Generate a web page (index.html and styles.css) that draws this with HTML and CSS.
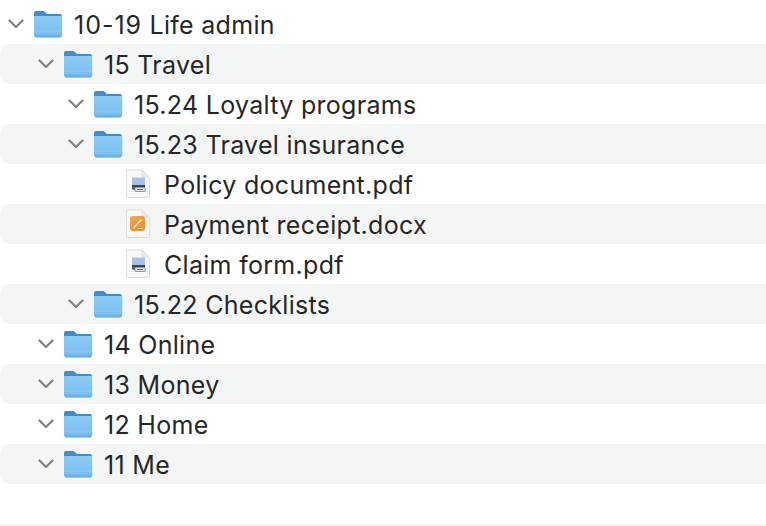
FILE: index.html
```html
<!DOCTYPE html>
<html lang="en">
<head>
<meta charset="utf-8">
<title>Life admin</title>
<link rel="stylesheet" href="styles.css">
</head>
<body>
<svg class="defs" width="0" height="0" aria-hidden="true">
  <defs>
    <linearGradient id="fb" x1="0" y1="0" x2="0" y2="1">
      <stop offset="0" stop-color="#8ccbf5"/>
      <stop offset="0.72" stop-color="#7cc0f2"/>
      <stop offset="1" stop-color="#68afe8"/>
    </linearGradient>
    <linearGradient id="ob" x1="0" y1="0" x2="0.6" y2="1">
      <stop offset="0" stop-color="#f5ab4a"/>
      <stop offset="1" stop-color="#ee8b2c"/>
    </linearGradient>
    <symbol id="chevron" viewBox="0 0 16 10">
      <path d="M1.500 1.500 8 8l6.500-6.500" fill="none" stroke="#7f8182" stroke-width="2.200" stroke-linecap="round" stroke-linejoin="round"/>
    </symbol>
    <symbol id="folder" viewBox="0 0 30 28">
      <path d="M1 5V3a2 2 0 0 1 2-2h6.500c1.200 0 1.800.5 2.600 1.300L14 4h13a2 2 0 0 1 2 2v4H1Z" fill="#3f8cd3"/>
      <path d="M1 7.200C1 6.300 1.500 6 2.300 6H28c.7 0 1.200.4 1.200 1.200V25a2 2 0 0 1-2 2H3a2 2 0 0 1-2-2Z" fill="url(#fb)"/>
      <path d="M1 21.200h28.200M1 23.200h28.200" stroke="#a4d5f7" stroke-width=".7" opacity=".75"/>
      <path d="M2 27.400h26" stroke="#8b97a3" stroke-width=".9" opacity=".7"/>
    </symbol>
    <symbol id="page" viewBox="0 0 26 30">
      <path d="M2.500 1h15.500L25.500 8.500V27a1.500 1.500 0 0 1-1.500 1.500H4A1.500 1.500 0 0 1 2.500 27Z" fill="#f9f9f9" stroke="#d8d8d8" stroke-width=".9"/>
      <path d="M18 1v6a1.500 1.500 0 0 0 1.500 1.500h6Z" fill="#e9e9e9" stroke="#dcdcdc" stroke-width=".6"/>
    </symbol>
    <symbol id="pdf" viewBox="0 0 26 30">
      <use href="#page" width="26" height="30"/>
      <rect x="8" y="8.500" width="13" height="8" fill="#a9c0ea"/>
      <rect x="8" y="16" width="13" height="2.200" fill="#3a4460"/>
      <path d="M11 18.500h10v4h-10Z" fill="#eceef2" stroke="#6a7080" stroke-width=".7"/>
      <path d="M8 18.200h3v2.300H8Z" fill="#4a526a"/>
      <path d="M13 20.500h6" stroke="#4a526a" stroke-width=".8"/>
    </symbol>
    <symbol id="docx" viewBox="0 0 26 30">
      <use href="#page" width="26" height="30"/>
      <rect x="6" y="7" width="15" height="15" rx="3" fill="url(#ob)"/>
      <path d="M10 18.500 17 11" stroke="#fdf1de" stroke-width="1.500" stroke-linecap="round"/>
      <path d="M14 19.500h5" stroke="#fbe2bd" stroke-width=".9"/>
    </symbol>
  </defs>
</svg>
<ul class="tree">
  <li class="row d0"><svg class="chev"><use href="#chevron"/></svg><svg class="folder"><use href="#folder"/></svg><span class="name"><span class="range">10-19</span> Life admin</span></li>
  <li class="row d1 alt"><svg class="chev"><use href="#chevron"/></svg><svg class="folder"><use href="#folder"/></svg><span class="name">15 Travel</span></li>
  <li class="row d2"><svg class="chev"><use href="#chevron"/></svg><svg class="folder"><use href="#folder"/></svg><span class="name">15.24 Loyalty programs</span></li>
  <li class="row d2 alt"><svg class="chev"><use href="#chevron"/></svg><svg class="folder"><use href="#folder"/></svg><span class="name">15.23 Travel insurance</span></li>
  <li class="row d3"><svg class="file"><use href="#pdf"/></svg><span class="name">Policy document.pdf</span></li>
  <li class="row d3 alt"><svg class="file"><use href="#docx"/></svg><span class="name">Payment receipt.docx</span></li>
  <li class="row d3"><svg class="file"><use href="#pdf"/></svg><span class="name">Claim form.pdf</span></li>
  <li class="row d2 alt"><svg class="chev"><use href="#chevron"/></svg><svg class="folder"><use href="#folder"/></svg><span class="name">15.22 Checklists</span></li>
  <li class="row d1"><svg class="chev"><use href="#chevron"/></svg><svg class="folder"><use href="#folder"/></svg><span class="name">14 Online</span></li>
  <li class="row d1 alt"><svg class="chev"><use href="#chevron"/></svg><svg class="folder"><use href="#folder"/></svg><span class="name">13 Money</span></li>
  <li class="row d1"><svg class="chev"><use href="#chevron"/></svg><svg class="folder"><use href="#folder"/></svg><span class="name">12 Home</span></li>
  <li class="row d1 alt"><svg class="chev"><use href="#chevron"/></svg><svg class="folder"><use href="#folder"/></svg><span class="name">11 Me</span></li>
  <li class="row"></li>
  <li class="end"></li>
</ul>
</body>
</html>
```

FILE: styles.css
```css
html, body {
  margin: 0;
  padding: 0;
  background: #ffffff;
  overflow: hidden;
}
body {
  height: 526px;
  font-family: Inter, "Liberation Sans", sans-serif;
  color: #262626;
}
.defs {
  display: block;
  height: 0;
}
.tree {
  list-style: none;
  margin: 0;
  padding: 4px 0 0;
}
.row {
  display: flex;
  align-items: center;
  height: 40px;
  box-sizing: border-box;
}
.alt {
  background: #f4f5f5;
  border-radius: 10px 0 0 10px;
}
.end {
  height: 2px;
  background: #f4f5f5;
  border-radius: 10px 0 0 0;
}
.d0 { padding-left: 8px; }
.d1 { padding-left: 38px; }
.d2 { padding-left: 68px; }
.d3 { padding-left: 124px; }
.chev {
  width: 16px;
  height: 10px;
  flex: none;
  margin-right: 9px;
}
.folder {
  width: 30px;
  height: 28px;
  flex: none;
  margin-right: 11px;
}
.file {
  width: 26px;
  height: 30px;
  flex: none;
  margin-right: 14px;
}
.name {
  font-size: 25px;
  line-height: 30px;
  letter-spacing: 0.3px;
  padding-top: 2px;
  white-space: nowrap;
}
.range {
  letter-spacing: 1px;
}
```
